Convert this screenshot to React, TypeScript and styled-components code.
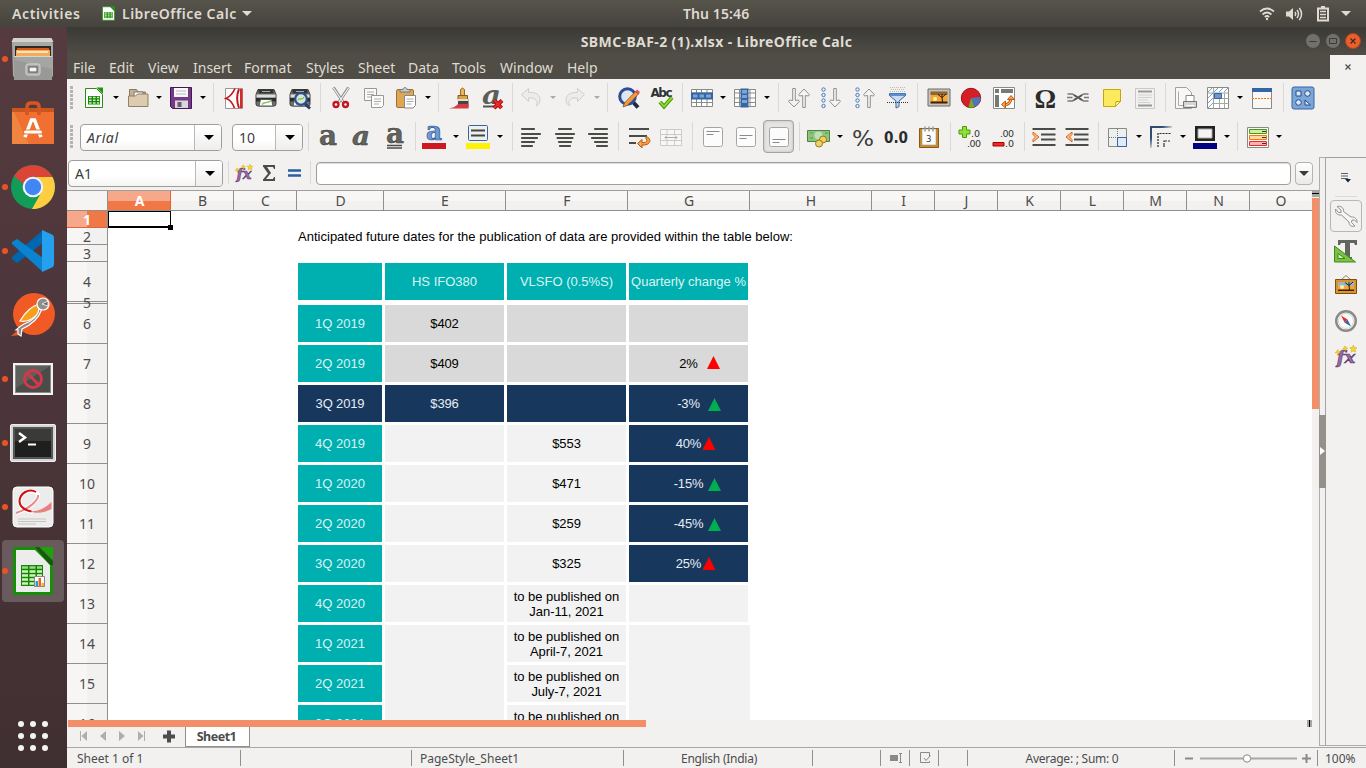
import React from 'react';
import styled, { createGlobalStyle, css } from 'styled-components';

const UI = `"Noto Sans", "Open Sans", sans-serif`;

const Global = createGlobalStyle`
  * { box-sizing: border-box; }
  html, body { margin: 0; padding: 0; }
  body { width: 1366px; height: 768px; overflow: hidden; background: #f2f1f0; font-family: ${UI}; color: #4c4c4c; }
  svg { display: block; flex: none; overflow: visible; }
`;

/* ---------- shell ---------- */
const Desktop = styled.div`
  width: 1366px;
  height: 768px;
  display: flex;
  flex-direction: column;
  overflow: hidden;
`;
const TopBar = styled.header`
  height: 27px;
  flex: none;
  display: grid;
  grid-template-columns: 683px auto 1fr;
  align-items: center;
  background: linear-gradient(#57544b, #45433d);
  color: #dfdbd2;
  font-size: 14px;
  font-weight: 600;
`;
const TopLeft = styled.div`
  display: flex;
  align-items: center;
  padding-left: 12px;
`;
const Tracked = styled.span<{ $ls?: number; $w?: number }>`
  white-space: nowrap;
  letter-spacing: ${p => p.$ls ?? 0}px;
  ${p => p.$w && css`width: ${p.$w}px;`}
`;
const TopRight = styled.div`
  display: flex;
  justify-content: flex-end;
  align-items: center;
  padding-right: 15px;
`;
const Body = styled.div`
  flex: 1;
  display: flex;
  min-height: 0;
`;

/* ---------- dock ---------- */
const Dock = styled.nav`
  width: 67px;
  flex: none;
  display: flex;
  flex-direction: column;
  background: linear-gradient(#553b40, #4b353a 50%, #402f30);
`;
const DockItem = styled.div<{ $active?: boolean; $running?: boolean }>`
  position: relative;
  height: 62px;
  width: 62px;
  margin: 1px 3px 1px 2px;
  border-radius: 4px;
  display: flex;
  align-items: center;
  justify-content: center;
  background: ${p => (p.$active ? '#685a5d' : 'transparent')};
  ${p => p.$running && css`
    &::before {
      content: '';
      position: absolute;
      left: 0;
      top: 28px;
      width: 6px;
      height: 6px;
      border-radius: 50%;
      background: #e95420;
    }
  `}
`;
const Launcher = styled.div`
  margin: auto 0 16px 17px;
`;

/* ---------- window ---------- */
const Window = styled.main`
  flex: 1;
  min-width: 0;
  display: flex;
  flex-direction: column;
  background: #f2f1f0;
`;
const TitleBar = styled.div`
  height: 28px;
  flex: none;
  display: grid;
  grid-template-columns: 61px 1fr 61px;
  align-items: center;
  text-align: center;
  background: linear-gradient(#3a3934, #504d46);
  color: #dfdbd2;
  font-size: 14px;
  font-weight: 700;
`;
const WindowButtons = styled.div`
  display: flex;
  gap: 4px;
`;
const MenuBar = styled.div`
  height: 24px;
  flex: none;
  display: flex;
  align-items: center;
  padding-left: 6px;
  background: #504d46;
  color: #dfdbd2;
  font-size: 14px;
`;
const CloseDoc = styled.div`
  margin-left: auto;
  width: 36px;
  height: 24px;
  display: grid;
  place-items: center;
  background: #f2f1f0;
`;
const Toolbar = styled.div<{ $h: number }>`
  height: ${p => p.$h}px;
  flex: none;
  display: flex;
  align-items: center;
`;
const Slot = styled.div<{ $w: number }>`
  width: ${p => p.$w}px;
  flex: none;
  display: flex;
  align-items: center;
  justify-content: center;
  padding-bottom: 2px;
`;
const Line = styled.i<{ $h?: number }>`
  width: 1px;
  height: ${p => p.$h ?? 29}px;
  background: #dad8d6;
`;
const Grip = styled.i`
  width: 3px;
  height: 23px;
  background: repeating-linear-gradient(#b6b4b2 0 3px, #f2f1f0 3px 4px);
`;
const Combo = styled.div<{ $w: number }>`
  width: ${p => p.$w}px;
  height: 27px;
  flex: none;
  display: flex;
  border: 1px solid #a09d9a;
  border-radius: 4px;
  background: linear-gradient(#fff 60%, #f4f4f3);
  overflow: hidden;
`;
const ComboText = styled.div<{ $italic?: boolean }>`
  flex: 1;
  padding-left: 6px;
  font-size: 14px;
  line-height: 26px;
  color: #3c3c3c;
  font-style: ${p => (p.$italic ? 'italic' : 'normal')};
  letter-spacing: ${p => (p.$italic ? 0.6 : 0)}px;
`;
const ComboButton = styled.div`
  width: 27px;
  border-left: 1px solid #bab7b5;
  display: grid;
  place-items: center;
  padding-left: 2px;
  background: linear-gradient(#fff, #efeeed);
`;
const Pressed = styled.div`
  width: 31px;
  height: 33px;
  flex: none;
  border: 1px solid #a5a29f;
  border-radius: 4px;
  background: #e6e4e2;
  box-shadow: inset 0 0 3px #bbb;
  display: grid;
  place-items: center;
`;
const Main = styled.div`
  flex: 1;
  min-height: 0;
  display: flex;
`;
const DocColumn = styled.div`
  width: 1252px;
  flex: none;
  display: flex;
  flex-direction: column;
`;
const FormulaBar = styled.div`
  height: 33px;
  flex: none;
  display: flex;
  align-items: center;
  padding-left: 1px;
`;
const FormulaInput = styled.div`
  width: 975px;
  height: 23px;
  border: 1px solid #a09d9a;
  border-radius: 4px;
  background: #fff;
  box-shadow: inset 0 1px 1px #ddd;
`;
const ExpandButton = styled.div`
  width: 18px;
  height: 23px;
  margin-left: 4px;
  border: 1px solid #b5b2af;
  border-radius: 4px;
  display: grid;
  place-items: center;
  background: linear-gradient(#fff, #eae9e8);
`;

/* ---------- sheet ---------- */
const SheetArea = styled.div`
  height: 530px;
  flex: none;
  display: flex;
  border-top: 1px solid #a19f9d;
`;
const RowHeads = styled.div`
  width: 41px;
  flex: none;
  overflow: hidden;
  border-right: 1px solid #918f8d;
`;
const Corner = styled.div`
  height: 20px;
  border-bottom: 1px solid #918f8d;
  background: #f5f4f3;
`;
const RowHead = styled.div<{ $h: number; $sel?: boolean }>`
  height: ${p => p.$h}px;
  border-bottom: 1px solid ${p => (p.$sel ? '#d8683c' : '#918f8d')};
  display: flex;
  align-items: center;
  justify-content: center;
  padding-top: 1px;
  font-size: 14px;
  line-height: 14px;
  font-weight: ${p => (p.$sel ? 700 : 400)};
  color: ${p => (p.$sel ? '#fff' : '#4c4c4c')};
  background: ${p =>
    p.$sel
      ? 'linear-gradient(90deg, #f7a78a 0 20px, #f07746 20px)'
      : 'linear-gradient(90deg, #f7f6f5 0 20px, #f2f1f0 20px)'};
`;
const SheetBody = styled.div`
  width: 1204px;
  flex: none;
  display: flex;
  flex-direction: column;
`;
const ColHeads = styled.div`
  height: 20px;
  flex: none;
  display: flex;
  border-bottom: 1px solid #918f8d;
`;
const ColHead = styled.div<{ $w: number; $sel?: boolean }>`
  width: ${p => p.$w}px;
  flex: none;
  border-right: 1px solid ${p => (p.$sel ? '#d8683c' : '#918f8d')};
  padding-left: 1px;
  text-align: center;
  font-size: 14px;
  line-height: 20px;
  font-weight: ${p => (p.$sel ? 700 : 400)};
  color: ${p => (p.$sel ? '#fff' : '#4c4c4c')};
  background: ${p =>
    p.$sel
      ? 'linear-gradient(#f7a78a 0 10px, #f07746 10px)'
      : 'linear-gradient(#f8f7f6 0 10px, #f2f1f0 10px)'};
  &:last-child { border-right: 0; }
`;
const Cells = styled.div`
  position: relative;
  flex: 1;
  min-height: 0;
  overflow: hidden;
  background: #fff;
  display: grid;
  grid-template-columns: 63px 63px 63px 87px 122px 122px 122px;
  grid-template-rows: 17px 17px 17px 40px 2px repeat(11, 40px);
  font-family: "Liberation Sans", Arial, sans-serif;
  font-size: 13px;
  line-height: 15px;
  color: #000;
`;
const Note = styled.div`
  grid-column: 4 / 8;
  grid-row: 2;
  padding-left: 1px;
  line-height: 18px;
  white-space: nowrap;
  letter-spacing: 0.015px;
`;
type Tone = 'teal' | 'grey' | 'navy' | 'pale';
const tones: Record<Tone, string> = {
  teal: 'background:#00b0b0;color:#d9f4f4;',
  grey: 'background:#d9d9d9;color:#000;letter-spacing:-0.15px;',
  navy: 'background:#17375d;color:#e8edf3;letter-spacing:-0.15px;',
  pale: 'background:#f2f2f2;color:#000;letter-spacing:-0.05px;',
};
const Cell = styled.div<{ $c: number; $r: number; $tone: Tone; $span?: number; $wide?: boolean }>`
  grid-column: ${p => p.$c};
  grid-row: ${p => p.$r} / span ${p => p.$span ?? 1};
  margin: 1px ${p => (p.$wide ? 0 : 2)}px 2px 1px;
  display: flex;
  align-items: center;
  justify-content: center;
  text-align: center;
  white-space: pre;
  position: relative;
  ${p => tones[p.$tone]}
`;
const Trend = styled.i<{ $up: boolean; $x: number; $y: number }>`
  position: absolute;
  left: ${p => p.$x}px;
  top: ${p => p.$y}px;
  width: 13px;
  height: 13px;
  clip-path: polygon(50% 0, 100% 100%, 0 100%);
  background: ${p => (p.$up ? '#ff0000' : '#00b050')};
`;
const Cursor = styled.div`
  position: absolute;
  left: 0;
  top: 0;
  width: 63px;
  height: 17px;
  border: 2px solid #000;
  border-width: 1px 1px 2px 1px;
  &::after {
    content: '';
    position: absolute;
    right: -3px;
    bottom: -4px;
    width: 5px;
    height: 5px;
    background: #000;
  }
`;
const VScroll = styled.div`
  width: 7px;
  display: flex;
  flex-direction: column;
`;
const VStub = styled.div`
  height: 6px;
  margin-bottom: 1px;
  background: linear-gradient(#a9a7a5 0 2px, #000 2px 3px, #a9a7a5 3px);
`;
const VThumb = styled.div`
  height: 211px;
  background: #f28e68;
`;
const HScroll = styled.div`
  height: 7px;
  flex: none;
  display: flex;
  justify-content: space-between;
  padding: 0 7px 0 1px;
`;
const HThumb = styled.div`
  width: 578px;
  height: 7px;
  background: #f28e68;
`;
const HStub = styled.div`
  width: 5px;
  height: 7px;
  background: linear-gradient(90deg, #a9a7a5 0 2px, #000 2px 3px, #a9a7a5 3px);
`;
const TabRow = styled.div`
  height: 20px;
  flex: none;
  display: flex;
  padding-left: 11px;
`;
const SheetTab = styled.div`
  width: 65px;
  height: 20px;
  margin-left: 1px;
  border: 1px solid #918f8d;
  border-top: 0;
  background: #fff;
  text-align: center;
  font-size: 12.5px;
  line-height: 19px;
  font-weight: 700;
  letter-spacing: -0.5px;
  padding-right: 2px;
`;

/* ---------- sidebar ---------- */
const Splitter = styled.div`
  width: 7px;
  height: 589px;
  flex: none;
  display: flex;
  align-items: center;
  border: 1px solid #b0aeac;
  border-right-color: #a5a3a1;
  padding-bottom: 1px;
`;
const SplitHandle = styled.div`
  width: 7px;
  height: 73px;
  margin: 0 -1px;
  flex: none;
  display: grid;
  place-items: center;
  background: #93918a;
`;
const Sidebar = styled.aside`
  flex: 1;
  height: 589px;
  display: flex;
  flex-direction: column;
  align-items: center;
  border-top: 1px solid #a19f9d;
  border-bottom: 1px solid #b0aeac;
  padding-top: 15px;
`;
const SideRule = styled.i`
  width: 22px;
  height: 1px;
  margin: 13px 0 3px;
  background: #dad8d6;
`;
const SideButton = styled.div<{ $active?: boolean }>`
  width: 32px;
  height: 32px;
  margin-bottom: 3px;
  display: grid;
  place-items: center;
  border-radius: 4px;
  border: 1px solid ${p => (p.$active ? '#b8b6b4' : 'transparent')};
`;

/* ---------- status ---------- */
const StatusBar = styled.footer`
  height: 21px;
  flex: none;
  display: flex;
  align-items: center;
  border-top: 1px solid #a9a7a5;
  font-size: 12px;
`;
const Field = styled.div<{ $w: number; $center?: boolean; $pad?: number; $ls?: number; $last?: boolean }>`
  width: ${p => p.$w}px;
  height: 16px;
  flex: none;
  display: flex;
  align-items: center;
  justify-content: ${p => (p.$center ? 'center' : 'flex-start')};
  padding-left: ${p => p.$pad ?? 0}px;
  letter-spacing: ${p => p.$ls ?? 0}px;
  border-right: ${p => (p.$last ? 0 : '1px solid #918f8d')};
  white-space: nowrap;
`;

/* ---------- icon helpers ---------- */
const I = ({ s = 24, h, v, children }: { s?: number; h?: number; v?: string; children: React.ReactNode }) => (
  <svg width={s} height={h ?? s} viewBox={v ?? '0 0 24 24'} fill="none">{children}</svg>
);
const Down = ({ w = 6, c = '#000' }: { w?: number; c?: string }) => (
  <svg width={w} height={w / 2} viewBox="0 0 10 5"><path d="M0 0h10l-5 5z" fill={c} /></svg>
);
const A = ({ w, c }: { w: number; c?: string }) => <Slot $w={w}><Down c={c} /></Slot>;
const Sep = ({ w }: { w: number }) => <Slot $w={w}><Line /></Slot>;
const T = ({ w, children }: { w: number; children: React.ReactNode }) => <Slot $w={w}>{children}</Slot>;

const CalcDoc = ({ s = 24 }: { s?: number }) => (
  <I s={s}>
    <path d="M3.500 2.500h11l6 6v13h-17z" fill="#fff" stroke="#2f8a12" />
    <path d="M14.500 1.500H21V8z" fill="#1c9a0e" />
    <path d="M6 10h12v8.500H6z" fill="#18870c" />
    <path d="M7 11.500h2.600M11 11.500h2.500M15 11.500h2.200M7 14.300h2.600M11 14.300h2.500M15 14.300h2.200M7 17h2.600M11 17h2.500M15 17h2.200" stroke="#c8f3b4" strokeWidth="1.500" />
  </I>
);
const Open = () => (
  <I>
    <path d="M3.500 20V3.500h7l2 2.500h7V12" fill="#c4b195" stroke="#8d7858" />
    <path d="M8 6h9v6H8z" fill="#fff" stroke="#777" />
    <path d="M2.500 10h7l2-2h10.500v12.500h-19.500z" fill="#dccbb0" stroke="#937e5f" />
  </I>
);
const Save = () => (
  <I>
    <path d="M1.500 1.500h21v21h-19l-2-2z" fill="#753a87" stroke="#401a50" />
    <path d="M5 2h14v9H5z" fill="#f8f8f8" /><path d="M7 5h10M7 8h10" stroke="#bbb" />
    <path d="M6 14.500h13V22H6z" fill="#d9d6dc" /><path d="M8.500 16h4v5h-4z" fill="#6a5a70" />
  </I>
);
const Pdf = () => (
  <I>
    <path d="M3.500 2.500h17v20h-17z" fill="#fff" stroke="#999" />
    <path d="M13 2.500C11.500 6 9 10 4 12.500c4.500 1 6.500 4.500 8.500 9.500" stroke="#c8171e" strokeWidth="1.700" />
    <path d="M17 3c-2.500 6-2.500 12.500 0 19" stroke="#c8171e" strokeWidth="2" /><path d="M18 3h2.500v19H18z" fill="#d42a2c" />
  </I>
);
const PrinterShape = () => (
  <>
    <path d="M4 3.500h16l2 5v9.500a2 2 0 0 1-2 2H4a2 2 0 0 1-2-2V8.500z" fill="#6f726e" stroke="#3c3e3a" />
    <path d="M4.500 3.500h15v4h-15z" fill="#353733" /><path d="M8 5.500h8" stroke="#aaa" />
    <path d="M2.500 8.500h19v3h-19z" fill="#dcdddb" /><path d="M2 12h20v3.500H2z" fill="#2c2e2b" />
    <path d="M6.500 13.500h11l1.500 6.500h-14z" fill="#fff" stroke="#555" />
    <path d="M8 18.500c3-4 5 0 9-4" stroke="#86c865" strokeWidth="1.600" />
  </>
);
const Preview = () => (
  <I>
    <PrinterShape />
    <circle cx="13" cy="13" r="5.800" fill="#d5e7cf" stroke="#2c4f9a" strokeWidth="2.200" />
    <path d="M10 14c2-3 4 1 6-3" stroke="#7ac055" strokeWidth="1.300" />
    <path d="m17 18 5 4.500" stroke="#2b3b66" strokeWidth="3" />
  </I>
);
const Cut = () => (
  <I>
    <path d="M4.500 1.500 14 16M19.500 1.500 10 16" stroke="#8a8d89" strokeWidth="3" />
    <path d="M4.500 2 14 16M19.500 2 10 16" stroke="#eee" strokeWidth="1.300" />
    <circle cx="7" cy="18.500" r="2.500" stroke="#c4141d" strokeWidth="2.300" />
    <circle cx="16.500" cy="18.500" r="2.500" stroke="#c4141d" strokeWidth="2.300" />
  </I>
);
const Copy = () => (
  <I>
    <path d="M2.500 2.500h12v12h-12z" fill="#fafafa" stroke="#969894" /><path d="M5 6h7M5 8.500h7M5 11h5" stroke="#aaa" />
    <path d="M9.500 9.500h12v10l-2 2h-10z" fill="#fdfdfd" stroke="#969894" /><path d="M12 13h7M12 15.500h7M12 18h5" stroke="#aaa" />
  </I>
);
const Paste = () => (
  <I>
    <rect x="2.500" y="3.500" width="17" height="18" rx="1.500" fill="#dda757" stroke="#a3712c" />
    <path d="M6 6V3.500h3C9 1 13 1 13 3.500h3V6z" fill="#c9cbc7" stroke="#777" />
    <path d="M10.500 9.500h11v10l-2.500 2.500h-8.500z" fill="#fff" stroke="#888" /><path d="M12.500 13h7M12.500 15.500h7M12.500 18h5" stroke="#aaa" />
  </I>
);
const Brush = () => (
  <I>
    <path d="M12.500 11V3.500q2-3 4 0V11z" fill="#e7b460" stroke="#9b6a20" />
    <path d="M10 9.500h9.500v4H10z" fill="#d9a441" stroke="#8b5b15" />
    <path d="M10 13h10.500v8H10z" fill="#4c4242" /><path d="M10 13h10.500v2H10z" fill="#ddd" />
    <path d="M10 18h10.500v4.500H1c5-1 7-2.500 9-4.500z" fill="#d33b46" />
  </I>
);
const GlyphText = styled.text<{ $sz: number; $bold?: boolean; $it?: boolean; $serif?: boolean }>`
  font-family: ${p => (p.$serif ? '"Liberation Serif", serif' : '"DejaVu Sans", sans-serif')};
  font-size: ${p => p.$sz}px;
  font-weight: ${p => (p.$bold ? 700 : 400)};
  font-style: ${p => (p.$it ? 'italic' : 'normal')};
`;
const SerifText = styled(GlyphText)`
  font-family: "DejaVu Serif", serif;
`;
const ClearFmt = () => (
  <I>
    <SerifText $sz={26} $bold $it x="1" y="17.500" fill="#5b5e59" textLength="19" lengthAdjust="spacingAndGlyphs">a</SerifText>
    <path d="M2 20.500h11" stroke="#555" strokeWidth="2" />
    <path d="m13.500 14.500 7 7.500M21 14.500 13 22" stroke="#a40000" strokeWidth="4" />
    <path d="m13.500 14.500 7 7.500M21 14.500 13 22" stroke="#ef2929" strokeWidth="2.300" />
  </I>
);
const Undo = ({ flip }: { flip?: boolean }) => (
  <I>
    <path transform={flip ? 'matrix(-1 0 0 1 24 0)' : undefined} d="m2.500 8.500 7-6v4C17 6 21 9 21 14c0 3-2 5-4 6 1-2 2-4 0-6-1.500-2-4-2.500-7.500-2v3.500z" fill="#ececeb" stroke="#cfcecd" />
  </I>
);
const Find = () => (
  <I>
    <path d="m16 16 5 5.500" stroke="#222b3f" strokeWidth="4" />
    <circle cx="10.500" cy="10.500" r="7.800" fill="#dfe6f0" stroke="#2b4c9b" strokeWidth="3" />
    <path d="m6 21 1.500-4L19 5l3 2.500L10 19.500z" fill="#f39a3b" stroke="#8a531a" strokeWidth=".8" />
    <path d="m18 6 2-2.500 3 2.500-2 2.500z" fill="#e0515a" />
  </I>
);
const Spell = () => (
  <I s={26} v="0 0 26 24">
    <GlyphText $sz={12} $bold x="1.500" y="10.500" fill="#2e3436" textLength="22">Abc</GlyphText>
    <path d="m11 16 4 4.500 8-9" stroke="#4e9a06" strokeWidth="4" />
    <path d="m11 16 4 4.500 8-9" stroke="#8ae234" strokeWidth="1.800" />
  </I>
);
const Rows = ({ col }: { col?: boolean }) => (
  <I>
    <path d="M1.500 3.500h21v17h-21z" fill="#fff" stroke="#888a85" />
    <path d="M1.500 7h21M1.500 16.500h21M1.500 12h21M6.500 3.500v17M11.500 3.500v17M17 3.500v17" stroke="#888a85" />
    {col
      ? <><path d="M7.500 2.500h8v19h-8z" fill="#3465a4" /><path d="M9 4h5v3.500H9zM9 9h5v3H9zM9 14h5v3H9z" fill="#7ea3d4" /></>
      : <><path d="M1 6.500h22v7H1z" fill="#3465a4" /><path d="M3 8.500h4.500v3H3zM9.500 8.500H14v3H9.500zM16 8.500h5v3h-5z" fill="#7ea3d4" /></>}
  </I>
);
const arrowDown = (x: number) => `M${x - 1.300} 2.500h2.600v12l3.200-.5.8 1.500-5.300 5.500-5.300-5.500.8-1.500 3.200.5z`;
const arrowUp = (x: number) => `M${x - 1.300} 21.500h2.600v-12l3.200.5.8-1.500-5.300-5.500-5.300 5.500.8 1.500 3.200-.5z`;
const Sort = () => (
  <I s={26} v="0 0 26 24"><path d={arrowDown(8)} fill="#f4f4f3" stroke="#8f918c" /><path d={arrowUp(18)} fill="#f4f4f3" stroke="#8f918c" /></I>
);
const SortDir = ({ up }: { up?: boolean }) => (
  <I>
    {[3.500, 9, 14.500, 20].map(y => <circle key={y} cx="4.500" cy={y} r="1.700" fill="#eef3fa" stroke="#4b78b5" />)}
    <path d={up ? arrowUp(16) : arrowDown(16)} fill="#f4f4f3" stroke="#8f918c" />
  </I>
);
const Filter = () => (
  <I>
    <path d="M5 1.500h15M6 3.500h13M5 5.500h15" stroke="#bbb" strokeDasharray="1 1" />
    <path d="M4.500 7.500h16v2L14 15v5.500l-3 1.500v-7L4.500 9.500z" fill="#c9dcf2" stroke="#3465a4" />
    <path d="M5 7.500h15v2.500H5z" fill="#5d8fce" /><path d="M2 16.500h21" stroke="#333" strokeDasharray="1 1" />
  </I>
);
const Picture = ({ frame }: { frame?: boolean }) => (
  <I>
    {frame && <path d="m8 5 4-3.500L16 5" stroke="#888" />}
    <path d={frame ? 'M1.500 5.500h21v14h-21z' : 'M1 3h22v17H1z'} fill={frame ? '#d8952e' : '#c4c5c2'} stroke={frame ? '#7d4e0c' : '#6b6d68'} />
    <path d={frame ? 'M4 8h16v9H4z' : 'M3.500 5.500h17v12h-17z'} fill="#f4a63a" />
    <path d={frame ? 'M4 8h16v4H4z' : 'M3.500 5.500h17V9h-17z'} fill={frame ? '#9db5cc' : '#8c6438'} />
    <path d={frame ? 'M4 15.500h16V17H4z' : 'M3.500 15.500h17v2h-17z'} fill="#3a2208" />
    <circle cx="8" cy="13" r="2" fill="#fff3a0" />
    <path d="m15.500 16-.5-4.500-4-3m4 3 4-3.500m-4 3.500V8" stroke="#2b1703" />
  </I>
);
const Chart = () => (
  <I>
    <circle cx="12" cy="12" r="9.700" fill="#d81e25" stroke="#9c1015" />
    <path d="M12 12 21.500 11a9.500 9.500 0 0 1-6 10z" fill="#4a78b8" /><path d="m12 12 3.500 9a9.500 9.500 0 0 1-6 .3z" fill="#6cae2e" />
  </I>
);
const Pivot = () => (
  <I>
    <path d="M1.500 1.500h21v21h-21z" fill="#fff" stroke="#888a85" /><path d="M3 3h4v4H3zM9 3h12v4H9zM3 9h4v12H3z" fill="#777975" />
    <path d="M11.500 18.500c5 .5 7.500-2 7.500-7" stroke="#c45a10" strokeWidth="3" /><path d="M11.500 18.500c5 .5 7.500-2 7.500-7" stroke="#fbb06a" strokeWidth="1.200" />
    <path d="m15.500 13.500 3.500-4 3.500 4zM13.500 15v7L9.500 18.500z" fill="#f7a04c" stroke="#c45a10" />
  </I>
);
const Link = () => (
  <I>
    <path d="M1.500 8h5l4 3M22.500 8h-5l-4 3M1.500 15h5l4-2.500M22.500 15h-5l-4-2.500M1 11.500h5.500M18 11.500h5" stroke="#777975" strokeWidth="1.500" />
    <path d="m8 9 8 5M16 9l-8 5" stroke="#555753" strokeWidth="1.800" />
  </I>
);
const StickyNote = () => (
  <I><path d="M3.500 3.500h17v12l-5 5h-12z" fill="#fbe95e" stroke="#c7a700" /><path d="m15.500 20.500.5-5 4.500 0z" fill="#fffbc0" stroke="#c7a700" /></I>
);
const HeaderFooter = () => (
  <I><path d="M2.500 2.500h19v20h-19z" fill="#f1f1f0" stroke="#c9c8c6" /><path d="M5 5.500h14M5 19.500h14" stroke="#999" strokeWidth="2" /><path d="M5 9h14M5 11.500h14M5 14h10M5 16.500h12" stroke="#d3d2d1" /></I>
);
const PrintArea = () => (
  <I>
    <path d="M2.500 1.500h11l5 5v16h-16z" fill="#f7f7f6" stroke="#a0a19e" /><path d="M5.500 5.500v14h5" stroke="#aaa" />
    <path d="M13 9.500h8v6h-8z" fill="#fff" stroke="#888" /><path d="M10.500 15.500h13v6h-13z" fill="#d5d6d3" stroke="#777" /><path d="M13 19.500h8" stroke="#fff" />
  </I>
);
const Freeze = () => (
  <I>
    <path d="M1.500 1.500h21v21h-21z" fill="#fff" stroke="#888a85" />
    <path d="M1.500 7h21M7.500 1.500v21M13.500 7v15M18.500 7v15M7.500 12.500h15M7.500 17.500h15" stroke="#a5a7a2" />
    <path d="m2 6 4-4M8 6l4-4M13 6l4-4M18 6l4-4M2 12l5-5M2 17l5-5M2 22l5-5" stroke="#7ba0cf" />
    <path d="M8.500 7.500h7v5h-7z" fill="#6f97cb" stroke="#3465a4" />
  </I>
);
const Split = () => (
  <I><path d="M2.500 2.500h19v20h-19z" fill="#f7f7f6" stroke="#888a85" /><path d="M2 2h20v4H2z" fill="#3465a4" /><path d="M2 12.500h20" stroke="#f57900" strokeDasharray="2 1" /></I>
);
const Shapes = () => (
  <I>
    <rect x="1" y="1" width="22" height="22" rx="2" fill="#7ca6d8" stroke="#3465a4" />
    <path d="M5 5h5v5H5zM14 19v-5l5.500 5z" fill="#dce8f6" stroke="#204a87" /><circle cx="16.500" cy="7.500" r="2.800" fill="#dce8f6" stroke="#204a87" /><circle cx="7.500" cy="16.500" r="2.800" fill="#dce8f6" stroke="#204a87" />
  </I>
);
const StyledA = ({ it, ul }: { it?: boolean; ul?: boolean }) => (
  <I>
    <SerifText $sz={it ? 26 : 27} $bold $it={it} x={it ? 3 : 3} y={ul ? 18 : 20} fill="#60635e" stroke="#3c3e39" strokeWidth=".5" textLength="18" lengthAdjust="spacingAndGlyphs">a</SerifText>
    {ul && <path d="M4 20.500h15M4 23h15" stroke="#4a4c48" strokeWidth="1.400" />}
  </I>
);
const FontColor = () => (
  <I s={24} h={26} v="0 0 24 26"><SerifText $sz={26} $bold x="4" y="16" fill="#6f9bd2" stroke="#2c5591" strokeWidth=".7" textLength="16" lengthAdjust="spacingAndGlyphs">a</SerifText><path d="M0 19h24v6H0z" fill="#cf1820" /></I>
);
const Highlight = () => (
  <I s={24} h={26} v="0 0 24 26"><rect x="2.500" y="1.500" width="19" height="15" rx="1" fill="#eef0ee" stroke="#3465a4" /><path d="M5 6.500h14M5 11.500h14" stroke="#444641" strokeWidth="2" /><path d="M0 19h24v6H0z" fill="#fff200" /></I>
);
const Align = ({ m }: { m: 'l' | 'c' | 'r' }) => (
  <I>
    {[14, 20, 17, 14, 12].map((w, i) => {
      const x = m === 'l' ? 2 : m === 'c' ? 12 - w / 2 : 22 - w;
      return <rect key={i} x={x} y={[3, 8, 12, 16, 20][i]} width={w} height="2" rx=".8" fill="#4a4c48" />;
    })}
  </I>
);
const Wrap = () => (
  <I>
    <path d="M2 4h20M2 11h18M2 18h7" stroke="#4a4c48" strokeWidth="2" />
    <path d="M19 11.500c6 1.500 5 9-3 8.500h-1v3l-4.500-4.500 4.500-4v3c5 .5 6-2 4-3.500z" fill="#f7a04c" stroke="#b85b0a" />
  </I>
);
const Merge = () => (
  <I><path d="M1.500 4.500h21v16h-21zM1.500 9.500h21M1.500 15.500h21M8 4.500v5M15.500 4.500v5M8 15.500v5M15.500 15.500v5" fill="#f7f7f7" stroke="#cbcac9" /><path d="M6 12.500h12M8 10.500l-2 2 2 2M16 10.500l2 2-2 2" stroke="#aaa" /></I>
);
const VAlign = ({ y }: { y: number }) => (
  <I><rect x="2.500" y="2.500" width="19" height="19" rx="2" fill="#fcfcfc" stroke="#a5a6a3" /><path d={`M5.500 ${y}.5h13M5.500 ${y + 3}.5h7`} stroke="#8a8c88" /></I>
);
const Currency = () => (
  <I>
    <path d="M.5 5.500h22v11H.5z" fill="#8cc47f" stroke="#4c8342" /><ellipse cx="11.500" cy="10.500" rx="4" ry="4" fill="#bfe0b6" /><path d="M3 8h3M3 13h3M18 8h3" stroke="#5a9650" />
    <circle cx="16" cy="14.500" r="3.500" fill="#f0cf67" stroke="#9b7a14" /><circle cx="12" cy="18.500" r="3.500" fill="#f0cf67" stroke="#9b7a14" />
  </I>
);
const CalendarIcon = () => (
  <I><path d="M2.500 3.500h19v19h-19z" fill="#c98a2e" stroke="#8a5812" /><path d="M5 4h14v16H5z" fill="#fcfcfc" stroke="#999" strokeWidth=".6" /><path d="M8 1.500v5M12 1.500v5M16 1.500v5" stroke="#999" strokeWidth="1.500" /><GlyphText $sz={8.500} x="9" y="16.500" fill="#333">3</GlyphText></I>
);
const Decimal = ({ add }: { add?: boolean }) => (
  <I s={26} h={26} v="0 0 26 26">
    {add ? <path d="M5.500 2.500h4v3.500h3.500v4H9.500v3.500h-4V10H2V6h3.500z" fill="#8ae234" stroke="#4e9a06" /> : <path d="M3 18.500h11v3.500H3z" fill="#ef2929" stroke="#a40000" />}
    <GlyphText $sz={9.500} x={add ? 14 : 10} y="13" fill="#2e3436" textLength={add ? 9 : 14}>{add ? '.0' : '.00'}</GlyphText>
    <GlyphText $sz={9.500} x={add ? 10 : 15} y="23" fill="#2e3436" textLength={add ? 14 : 9}>{add ? '.00' : '.0'}</GlyphText>
  </I>
);
const Indent = ({ back }: { back?: boolean }) => (
  <I><path d="M.5 4h23M9 9.500h14.500M9 14.500h14.500M.5 20h23" stroke="#4a4c48" strokeWidth="2.200" /><path d={back ? 'M7 7v2.500L4.500 12 7 14.500V17l-6-5z' : 'M1 7v2.500L3.500 12 1 14.500V17l6-5z'} fill="#fcc08a" stroke="#d9661a" /></I>
);
const Borders = () => (
  <I><path d="M2.500 3.500h18v18h-18z" fill="#eef0ed" stroke="#888a85" /><path d="M11.500 4v8M3 12.500h9" stroke="#777" strokeDasharray="1 1" /><path d="M11.500 12.500h9v9h-9z" fill="#e1ebf7" stroke="#3465a4" /></I>
);
const BorderStyle = () => (
  <I>
    <defs><linearGradient id="fade" x1="0" y1="0" x2="1" y2="1"><stop offset=".3" stopColor="#2f4d73" /><stop offset=".58" stopColor="#2f4d73" stopOpacity="0" /></linearGradient></defs>
    <path d="M1 23V1h22v2H3v20z" fill="url(#fade)" />
    <path d="M9 22V8.500h13" stroke="#222" strokeDasharray="2 1" strokeWidth="1.200" /><path d="M15 22v-6h6" stroke="#333" strokeWidth="1.200" strokeDasharray="4 1" />
  </I>
);
const BorderColor = () => (
  <I h={26} v="0 0 24 26"><path d="M3.500 3.500h17v12h-17z" fill="#f4f4f4" stroke="#222" strokeWidth="3" /><path d="M5 5h14v9H5z" stroke="#aaa" /><path d="M0 19h24v6H0z" fill="#000080" /></I>
);
const Cond = () => (
  <I><path d="M1.500 2.500h21v20h-21z" fill="#fff" stroke="#888a85" /><path d="M3.500 4.500h17v4h-17z" fill="#c9efae" stroke="#4e9a06" /><path d="M3.500 10.500h17v4h-17z" fill="#fcd9a5" stroke="#f57900" /><path d="M3.500 16.500h17v4h-17z" fill="#f9b3b3" stroke="#ef2929" /><path d="M16 6.500h4M16 12.500h4M16 18.500h4" stroke="#333" /></I>
);
const Fx = ({ s = 18 }: { s?: number }) => (
  <I s={s}>
    <SerifText $sz={19} $bold $it x="2" y="20" fill="#9a6aa8" stroke="#5c3566" strokeWidth=".7" textLength="20" lengthAdjust="spacingAndGlyphs">fx</SerifText>
    <path d="m3 5 1 2 2 .5-2 1-.5 2-1.500-2-2 0 1.500-1.500zM11 1l1 2 2 .5-2 1-.5 2-1.500-2-2 0L9.500 3zM20 0l1 2.500 3 .5-2 2 .5 2.500L20 6.500 17.500 8l.5-3-2-2 3-.5z" fill="#f6d531" stroke="#c9a400" strokeWidth=".5" />
  </I>
);
const Wrench = () => (
  <I><path d="M3 2.500 7 6l0 2.500-2.500 0L1.500 5c-.5 4 2 6.500 6 6l7.500 7c0 4 3 5 6 4l-3.500-3.500.5-2.500 2.500 0 2.500 2.500c.5-3-2-6-6-5.500L9.500 7.500c.5-3.500-2.500-6-6.500-5z" fill="#f6f6f5" stroke="#8f918c" /></I>
);
const StylesIcon = () => (
  <I><path d="M4 1h19v5h-2l-1-2h-4v14h2v2H9v-2h2V4H7L6 6H4z" fill="#62655f" /><path d="M.5 7v16h21z" fill="#7cc04a" stroke="#3f8c10" /><path d="M4 14.500v5h7z" fill="#d3f0bb" stroke="#3f8c10" /></I>
);
const Compass = () => (
  <I><circle cx="12" cy="12" r="9.800" fill="#fafafa" stroke="#888a85" strokeWidth="2.400" /><circle cx="12" cy="12" r="7.500" stroke="#d5d5d5" /><path d="m7 6.500 6.500 4-3 3z" fill="#ef2929" /><path d="m17 17.500-6.500-4 3-3z" fill="#3465a4" /></I>
);

/* ---------- dock icons ---------- */
const Files = () => (
  <I s={44} v="0 0 44 44">
    <path d="M2 1.500h38l2 5v33H2l-1-34z" fill="#a9a9a7" /><path d="M2.500 1h38l2 4h-42z" fill="#d2d2d0" />
    <path d="M4 9h36v10H4z" fill="#2a2a28" /><path d="M6 11h32v8H6z" fill="#d65a16" /><path d="M5 13h34v6H5z" fill="#f3ab57" /><path d="M6 15h31" stroke="#fff3e0" strokeWidth="1.500" />
    <path d="M3 19h38v24H3z" fill="#999997" /><path d="M3 19h38v1H3z" fill="#d5d5d3" /><path d="M4 20h37v12L4 23z" fill="#fff" opacity=".12" />
    <rect x="15" y="27" width="14" height="11" rx="2" fill="#ababa9" stroke="#d7d7d5" /><rect x="18" y="30" width="8" height="5" fill="#f6f6f6" stroke="#555" />
  </I>
);
const Software = () => (
  <I s={44} v="0 0 44 44">
    <path d="M1 7h42v36H1z" fill="#ef7030" /><path d="M1 7 18 43H1z" fill="#f0853f" /><path d="M1 7h42v4H1z" fill="#c9551f" />
    <path d="M16 14V6q0-4 4-4h4q4 0 4 4v8" stroke="#d95520" strokeWidth="3.500" />
    <path d="m14 36 6.500-17h3L30 36" stroke="#fff" strokeWidth="3.500" /><path d="M12 31h20" stroke="#ef7030" strokeWidth="5" /><rect x="13" y="29.500" width="18" height="3" rx="1.500" fill="#fff" />
  </I>
);
const Chrome = () => (
  <I s={46} v="0 0 46 46">
    <circle cx="23" cy="23" r="22" fill="#119c58" />
    <path d="M4 12A22 22 0 0 1 42.500 13H23a10 10 0 0 0-9.500 7z" fill="#db4437" />
    <path d="M42.500 13A22 22 0 0 1 22 45l9.500-17A10 10 0 0 0 29 15l-3-2z" fill="#ffcd40" />
    <circle cx="23" cy="23" r="10.300" fill="#f4f4f4" /><circle cx="23" cy="23" r="8.200" fill="#4285f4" />
  </I>
);
const VSCode = () => (
  <I s={44} v="0 0 44 44">
    <path d="M32 1 1 28l0 2 5 4 26-20z" fill="#0066b0" /><path d="m32 43-31-28v-2l5-3 26 19z" fill="#0a84d0" /><path d="m31 1 10 4.500q2 1 2 3v27q0 2-2 3L31 43z" fill="#25a0ee" />
  </I>
);
const Postman = () => (
  <I s={46} v="0 0 46 46">
    <circle cx="24" cy="22" r="21" fill="#f15a24" /><path d="m1 44 7-6 3 5z" fill="#e35a2a" />
    <path d="M30 12c-7 1-15 8-20 17 8 2 17-4 21-12z" fill="#f9a01b" stroke="#fff" strokeWidth="1.200" />
    <path d="M29 17c-1 7-8 13-15 15-4 2-6 4-8 6l2 0 0 4 3 2 1-7c9-4 16-9 20-20z" fill="#8a8a8a" stroke="#fff" strokeWidth="1.200" />
    <circle cx="33" cy="12" r="6" fill="#8f8f8f" stroke="#fff" strokeWidth="1.200" /><path d="m32 12 6-3v5z" fill="#666" stroke="#fff" strokeWidth=".8" />
  </I>
);
const Blocked = () => (
  <I s={42} h={34} v="0 0 42 34">
    <path d="M1 1h40v32H1z" fill="#f2f2f2" /><path d="M3 3h36v28H3z" fill="#888" /><path d="M4 4h34v26H4z" fill="#4b4b49" /><path d="M4 4h34L4 26z" fill="#6a6a68" opacity=".6" />
    <circle cx="21" cy="17" r="8.500" stroke="#d13a4a" strokeWidth="3" /><path d="m15 11 12 12" stroke="#d13a4a" strokeWidth="3" />
  </I>
);
const Terminal = () => (
  <I s={46} h={38} v="0 0 46 38">
    <rect x=".5" y=".5" width="45" height="37" rx="1.500" fill="#d5d5d3" stroke="#eee" /><path d="M3 3h40v32H3z" fill="#555" /><path d="M5 5h36v28H5z" fill="#1f1f1f" /><path d="M5 5h36v12H5z" fill="#3a3a39" />
    <path d="m9 9 6 4.500L9 18" stroke="#fff" strokeWidth="2.500" /><path d="M18 20.500h8" stroke="#fff" strokeWidth="2" />
  </I>
);
const Evince = () => (
  <I s={42} v="0 0 42 42">
    <rect x="1" y="1" width="40" height="40" rx="4" fill="#ececec" stroke="#fff" />
    <path d="M4 27C17 23 27 14 26 9 25 3 8 3 7.500 15c0 7 6 10 13 11" stroke="#fff" strokeWidth="4" />
    <path d="M16 25c9 1 16-2 23.500-9v7c-7 4-15 5-23.500 2z" fill="#e98080" />
    <path d="M4 27C17 23 27 14 26 9" stroke="#e98a8a" strokeWidth="2" />
    <path d="M24 6C17 2 8 7 7.500 15c0 6 5 9 12 10.500" stroke="#cc1111" strokeWidth="2" />
    <path d="M6 33h28M6 35.500h28M6 38h18" stroke="#c5c5c5" />
  </I>
);
const CalcBig = () => (
  <I s={40} h={48} v="0 0 40 48">
    <path d="M2 0h22l16 16v30q0 2-2 2H2q-2 0-2-2V2q0-2 2-2z" fill="#159006" /><path d="M3 3h19l15 15v27H3z" fill="#ececec" /><path d="M22 0h4l14 14v4h-3z" fill="#0f5d05" />
    <path d="M27 0h13v13z" fill="#1ba308" /><path d="M8 18h22v21H8z" fill="#168409" />
    {[19.500, 23.500, 27.500, 31.500, 35.500].map((y, i) => <path key={y} d={`M9 ${y + 1}h6M16.500 ${y + 1}h6M24 ${y + 1}h5`} stroke={i ? '#ccf5bb' : '#8ede7c'} strokeWidth="2.600" />)}
    <path d="M21.500 29.500h10v10h-10z" fill="#fff" stroke="#888" /><path d="M22.500 34h2.500v5h-2.500z" fill="#2a9ad8" /><path d="M25.500 31h2.500v8h-2.500z" fill="#e8641b" /><path d="M28.500 36h2.500v3h-2.500z" fill="#f1b816" />
  </I>
);

/* ---------- data ---------- */
const cols: [string, number][] = [['A', 63], ['B', 63], ['C', 63], ['D', 87], ['E', 122], ['F', 122], ['G', 122], ['H', 122], ['I', 63], ['J', 63], ['K', 63], ['L', 63], ['M', 63], ['N', 63], ['O', 61]];
const rowHeights = [17, 17, 17, 40, 2, 40, 40, 40, 40, 40, 40, 40, 40, 40, 40, 40];
const menus: [string, number][] = [['File', 36], ['Edit', 39], ['View', 45], ['Insert', 51], ['Format', 62], ['Styles', 52], ['Sheet', 50], ['Data', 44], ['Tools', 48], ['Window', 67], ['Help', 40]];
type Row = { q: string; qt?: Tone; e?: string; et: Tone; f?: string; ft: Tone; g?: string; gt: Tone; up?: boolean; gx?: number; gy?: number };
const rows: Row[] = [
  { q: '1Q 2019', e: '$402', et: 'grey', ft: 'grey', gt: 'grey' },
  { q: '2Q 2019', e: '$409', et: 'grey', ft: 'grey', g: '2%', gt: 'grey', up: true, gx: 78, gy: 11 },
  { q: '3Q 2019', qt: 'navy', e: '$396', et: 'navy', ft: 'navy', g: '-3%', gt: 'navy', up: false, gx: 79, gy: 13 },
  { q: '4Q 2019', et: 'pale', f: '$553', ft: 'pale', g: '40%', gt: 'navy', up: true, gx: 73.500, gy: 12 },
  { q: '1Q 2020', et: 'pale', f: '$471', ft: 'pale', g: '-15%', gt: 'navy', up: false, gx: 79, gy: 13 },
  { q: '2Q 2020', et: 'pale', f: '$259', ft: 'pale', g: '-45%', gt: 'navy', up: false, gx: 79, gy: 13 },
  { q: '3Q 2020', et: 'pale', f: '$325', ft: 'pale', g: '25%', gt: 'navy', up: true, gx: 73.500, gy: 12 },
  { q: '4Q 2020', et: 'pale', f: 'to be published on\nJan-11, 2021', ft: 'pale', gt: 'pale' },
];
const future: [string, string][] = [['1Q 2021', 'April-7, 2021'], ['2Q 2021', 'July-7, 2021'], ['3Q 2021', 'Oct-7, 2021']];

const StandardBar = () => (
  <Toolbar $h={39}>
    <T w={9}><Grip /></T><Slot $w={2} />
    <T w={32}><CalcDoc /></T><A w={12} /><T w={31}><Open /></T><A w={11} /><T w={33}><Save /></T><A w={11} /><Sep w={10} />
    <T w={31}><Pdf /></T><T w={34}><I><PrinterShape /></I></T><T w={33}><Preview /></T><Sep w={9} />
    <T w={32}><Cut /></T><T w={33}><Copy /></T><T w={32}><Paste /></T><A w={11} /><Sep w={10} />
    <T w={33}><Brush /></T><T w={34}><ClearFmt /></T><Sep w={5} />
    <T w={32}><Undo /></T><A w={12} c="#aaa" /><T w={32}><Undo flip /></T><A w={12} c="#aaa" /><Sep w={9} />
    <T w={33}><Find /></T><T w={33}><Spell /></T><Sep w={8} />
    <T w={31}><Rows /></T><A w={12} /><T w={32}><Rows col /></T><A w={12} /><Sep w={10} />
    <T w={31}><Sort /></T><T w={34}><SortDir /></T><T w={33}><SortDir up /></T><T w={32}><Filter /></T><Sep w={9} />
    <T w={33}><Picture /></T><T w={32}><Chart /></T><T w={34}><Pivot /></T><Sep w={8} />
    <T w={32}><I><GlyphText $sz={27} $bold $serif x="1.500" y="21.500" fill="#2b2d2b">Ω</GlyphText></I></T>
    <T w={34}><Link /></T><T w={33}><StickyNote /></T><T w={33}><HeaderFooter /></T><Sep w={8} />
    <T w={32}><PrintArea /></T><T w={33}><Freeze /></T><A w={11} /><T w={34}><Split /></T><Sep w={8} />
    <T w={32}><Shapes /></T>
  </Toolbar>
);

const FormatBar = () => (
  <Toolbar $h={39}>
    <T w={9}><Grip /></T><Slot $w={4} />
    <Combo $w={142}><ComboText $italic>Arial</ComboText><ComboButton><Down w={10} /></ComboButton></Combo>
    <Slot $w={10} />
    <Combo $w={71}><ComboText>10</ComboText><ComboButton><Down w={10} /></ComboButton></Combo>
    <Sep w={11} />
    <T w={27}><StyledA /></T><T w={40}><StyledA it /></T><T w={27}><StyledA ul /></T><Sep w={14} />
    <T w={24}><FontColor /></T><A w={20} /><T w={24}><Highlight /></T><A w={20} /><Sep w={4} />
    <T w={34}><Align m="l" /></T><T w={33}><Align m="c" /></T><T w={33}><Align m="r" /></T><Sep w={9} />
    <T w={31}><Wrap /></T><T w={34}><Merge /></T><Sep w={8} />
    <T w={33}><VAlign y={6} /></T><T w={33}><VAlign y={10} /></T><T w={33}><Pressed><VAlign y={14} /></Pressed></T><Sep w={8} />
    <T w={31}><Currency /></T><A w={12} />
    <T w={34}><I><GlyphText $sz={22} x="1" y="20.500" fill="#3b3d3a" textLength="22" lengthAdjust="spacingAndGlyphs">%</GlyphText></I></T>
    <T w={32}><I><GlyphText $sz={16} $bold x="0" y="18" fill="#2b2d2b" textLength="24" lengthAdjust="spacingAndGlyphs">0.0</GlyphText></I></T>
    <T w={34}><CalendarIcon /></T><Sep w={8} />
    <T w={31}><Decimal add /></T><T w={35}><Decimal /></T><Sep w={8} />
    <T w={32}><Indent /></T><T w={34}><Indent back /></T><Sep w={8} />
    <T w={31}><Borders /></T><A w={12} /><T w={32}><BorderStyle /></T><A w={12} /><T w={32}><BorderColor /></T><A w={12} /><Sep w={9} />
    <T w={31}><Cond /></T><A w={12} />
  </Toolbar>
);

const Sheet = () => (
  <SheetArea>
    <RowHeads>
      <Corner />
      {rowHeights.map((h, i) => <RowHead key={i} $h={h} $sel={i === 0}><span>{i + 1}</span></RowHead>)}
    </RowHeads>
    <SheetBody>
      <ColHeads>{cols.map(([n, w]) => <ColHead key={n} $w={w} $sel={n === 'A'}>{n}</ColHead>)}</ColHeads>
      <Cells>
        <Note>Anticipated future dates for the publication of data are provided within the table below:</Note>
        {['', 'HS IFO380', 'VLSFO (0.5%S)', 'Quarterly change %'].map((t, i) => <Cell key={i} $c={4 + i} $r={4} $tone="teal">{t}</Cell>)}
        {rows.map((r, i) => (
          <React.Fragment key={r.q}>
            <Cell $c={4} $r={6 + i} $tone={r.qt ?? 'teal'}>{r.q}</Cell>
            <Cell $c={5} $r={6 + i} $tone={r.et}>{r.e}</Cell>
            <Cell $c={6} $r={6 + i} $tone={r.ft}>{r.f}</Cell>
            <Cell $c={7} $r={6 + i} $tone={r.gt}>{r.g}{r.g && <Trend $up={!!r.up} $x={r.gx!} $y={r.gy!} />}</Cell>
          </React.Fragment>
        ))}
        {future.map(([q, d], i) => (
          <React.Fragment key={q}>
            <Cell $c={4} $r={14 + i} $tone="teal">{q}</Cell>
            <Cell $c={6} $r={14 + i} $tone="pale">{`to be published on\n${d}`}</Cell>
          </React.Fragment>
        ))}
        <Cell $c={5} $r={14} $span={3} $tone="pale" />
        <Cell $c={7} $r={14} $span={3} $tone="pale" $wide />
        <Cursor />
      </Cells>
    </SheetBody>
    <VScroll><VStub /><VThumb /></VScroll>
  </SheetArea>
);

export default function App() {
  return (
    <Desktop>
      <Global />
      <TopBar>
        <TopLeft>
          <Tracked $w={88} $ls={0.6}>Activities</Tracked>
          <CalcDoc s={17} />
          <Slot $w={5} />
          <Tracked $w={120} $ls={0.5}>LibreOffice Calc</Tracked>
          <Down w={10} c="#dfdbd2" />
        </TopLeft>
        <Tracked $ls={0.1}>Thu 15:46</Tracked>
        <TopRight>
          <svg width="16" height="14" viewBox="0 0 16 14" fill="none" stroke="#dfdbd2" strokeWidth="1.700"><path d="M1 4.500q7-6 14 0M3.500 7.500q4.500-4 9 0M5.800 10q2.200-2 4.400 0" /><circle cx="8" cy="12" r="1.200" fill="#dfdbd2" stroke="none" /></svg>
          <Slot $w={11} />
          <svg width="17" height="14" viewBox="0 0 17 14" fill="none" stroke="#dfdbd2" strokeWidth="1.500"><path d="M0 4.500h3l4-3.500v12L3 9.500H0z" fill="#dfdbd2" stroke="none" /><path d="M9 5q1.500 2 0 4M11 3q3 4 0 8M13.300 1q4.500 6 0 12" /></svg>
          <Slot $w={14} />
          <svg width="12" height="16" viewBox="0 0 12 16" fill="none" stroke="#dfdbd2"><path d="M1 2.500h10v12H1z" strokeWidth="2" /><path d="M4 1h4" strokeWidth="2" /><path d="M3 5.500h6M3 8.500h6M3 11.500h6" strokeWidth="1.500" /></svg>
          <Slot $w={12} />
          <Down w={10} c="#dfdbd2" />
        </TopRight>
      </TopBar>
      <Body>
        <Dock>
          <DockItem $running><Files /></DockItem>
          <DockItem><Software /></DockItem>
          <DockItem $running><Chrome /></DockItem>
          <DockItem $running><VSCode /></DockItem>
          <DockItem><Postman /></DockItem>
          <DockItem $running><Blocked /></DockItem>
          <DockItem $running><Terminal /></DockItem>
          <DockItem $running><Evince /></DockItem>
          <DockItem $running $active><CalcBig /></DockItem>
          <Launcher>
            <svg width="32" height="32" viewBox="0 0 32 32" fill="#f4f3f3">
              {[0, 1, 2].map(y => [0, 1, 2].map(x => <circle key={`${x}${y}`} cx={4 + x * 12} cy={4 + y * 12} r="3" />))}
            </svg>
          </Launcher>
        </Dock>
        <Window>
          <TitleBar>
            <span />
            <Tracked $ls={0.4}>SBMC-BAF-2 (1).xlsx - LibreOffice Calc</Tracked>
            <WindowButtons>
              <svg width="16" height="16"><circle cx="8" cy="8" r="7.500" fill="#72706a" stroke="#44423d" /><path d="M4.500 8.500h7" stroke="#3c3b37" /></svg>
              <svg width="16" height="16"><circle cx="8" cy="8" r="7.500" fill="#72706a" stroke="#44423d" /><path d="M4.500 5.500h7v5h-7z" fill="none" stroke="#3c3b37" /></svg>
              <svg width="16" height="16"><circle cx="8" cy="8" r="7.500" fill="#e9602f" stroke="#b8401a" /><path d="m5.500 5.500 5 5m0-5-5 5" stroke="#4d2415" strokeWidth="1.200" /></svg>
            </WindowButtons>
          </TitleBar>
          <MenuBar>
            {menus.map(([m, w]) => <Tracked key={m} $w={w}>{m}</Tracked>)}
            <CloseDoc><svg width="6" height="6"><path d="m.5.500 5 5m0-5-5 5" stroke="#4c4c4c" strokeWidth="1.200" /></svg></CloseDoc>
          </MenuBar>
          <StandardBar />
          <FormatBar />
          <Main>
            <DocColumn>
              <FormulaBar>
                <Combo $w={155}><ComboText>A1</ComboText><ComboButton><Down w={10} /></ComboButton></Combo>
                <Slot $w={11}><Line $h={23} /></Slot>
                <Slot $w={20}><Fx /></Slot>
                <Slot $w={30}><svg width="14" height="18" viewBox="0 0 14 18"><path d="M1 1h12v4h-1l-1-2H5l4 6-5 6h7l1-2h1v4H1v-1.500L6 9.500 1 2.500z" fill="#4a4c48" /></svg></Slot>
                <Slot $w={20}><svg width="13" height="8"><path d="M0 1.500h13M0 6.500h13" stroke="#2b5f9e" strokeWidth="2.500" /></svg></Slot>
                <Slot $w={12}><Line $h={23} /></Slot>
                <FormulaInput />
                <ExpandButton><Down w={10} c="#3c3c3c" /></ExpandButton>
              </FormulaBar>
              <Sheet />
              <HScroll><HThumb /><HStub /></HScroll>
              <TabRow>
                <Slot $w={12}><svg width="8" height="10"><path d="M.5 0v10" stroke="#b0aeac" /><path d="M7 0v10L1.500 5z" fill="#b0aeac" /></svg></Slot>
                <Slot $w={26}><svg width="6" height="10"><path d="M6 0v10L0 5z" fill="#b0aeac" /></svg></Slot>
                <Slot $w={12}><svg width="6" height="10"><path d="M0 0v10l6-5z" fill="#b0aeac" /></svg></Slot>
                <Slot $w={26}><svg width="8" height="10"><path d="M7.500 0v10" stroke="#b0aeac" /><path d="M1 0v10l5.500-5z" fill="#b0aeac" /></svg></Slot>
                <Slot $w={30}><svg width="12" height="12"><path d="M0 6.500h12M6 .500v12" stroke="#4c4c4c" strokeWidth="4" /></svg></Slot>
                <SheetTab>Sheet1</SheetTab>
              </TabRow>
            </DocColumn>
            <Splitter>
              <SplitHandle><svg width="5" height="8"><path d="M0 0v8l5-4z" fill="#fff" /></svg></SplitHandle>
            </Splitter>
            <Sidebar>
              <svg width="10" height="10" viewBox="0 0 10 10"><path d="M0 .500h7M0 3h7M0 5.500h7" stroke="#52607a" /><path d="M4 6h6L7 9.500z" fill="#1b2438" /></svg>
              <SideRule />
              <SideButton $active><Wrench /></SideButton>
              <SideButton><StylesIcon /></SideButton>
              <SideButton><Picture frame /></SideButton>
              <SideButton><Compass /></SideButton>
              <SideButton><Fx s={22} /></SideButton>
            </Sidebar>
          </Main>
          <StatusBar>
            <Field $w={174} $pad={10}>Sheet 1 of 1</Field>
            <Field $w={171} />
            <Field $w={212} $pad={8}>PageStyle_Sheet1</Field>
            <Field $w={189} $center $pad={2} $ls={-0.25}>English (India)</Field>
            <Field $w={68} />
            <Field $w={29} $center $pad={2}><svg width="12" height="10"><path d="M0 2h8v6H0z" fill="#8b8987" /><path d="M9 .500h3M10.500.500v9M9 9.500h3" stroke="#8b8987" /></svg></Field>
            <Field $w={29} $center $pad={2}><svg width="11" height="12" fill="none" stroke="#8b8987"><path d="M9.500 5V.500h-9v10h9V9M4 6l2 2.500 4.500-5" /></svg></Field>
            <Field $w={29} />
            <Field $w={207} $center $pad={2} $ls={-0.25}>Average: ; Sum: 0</Field>
            <Field $w={143} $center $pad={4}>
              <svg width="126" height="12" stroke="#8b8987" fill="none"><path d="M0 6.500h8M117 6.500h9M121.500 2v9" strokeWidth="2" /><path d="M15 6.500h97" stroke="#a9a7a5" strokeWidth="2" /><circle cx="62" cy="6.500" r="3.700" fill="#fff" /></svg>
            </Field>
            <Field $w={48} $pad={7} $last>100%</Field>
          </StatusBar>
        </Window>
      </Body>
    </Desktop>
  );
}
